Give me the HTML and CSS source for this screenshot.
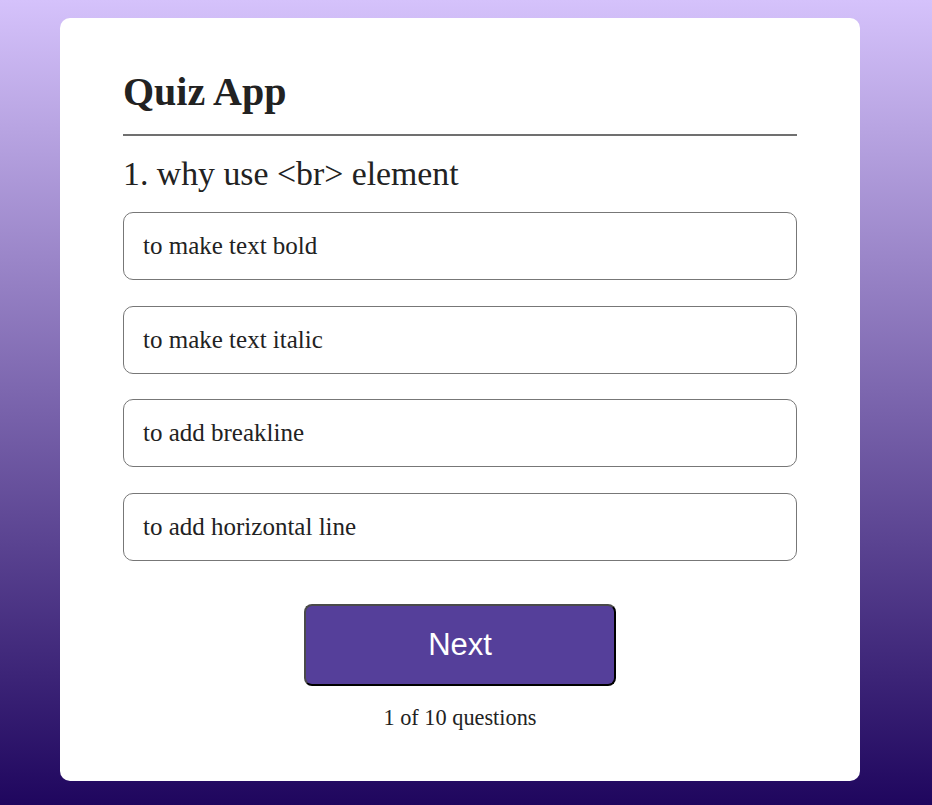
FILE: index.html
```html
<!DOCTYPE html>
<html lang="en">
<head>
<meta charset="utf-8">
<title>Quiz App</title>
<link rel="stylesheet" href="styles.css">
</head>
<body>
<div class="app">
  <h1 class="title">Quiz App</h1>
  <div class="quiz">
    <h2 class="question">1. why use &lt;br&gt; element</h2>
    <div class="answers">
      <button class="answer">to make text bold</button>
      <button class="answer">to make text italic</button>
      <button class="answer">to add breakline</button>
      <button class="answer">to add horizontal line</button>
    </div>
    <button class="next">Next</button>
    <p class="progress">1 of 10 questions</p>
  </div>
</div>
</body>
</html>
```

FILE: styles.css
```css
* { box-sizing: border-box; }

html, body {
  margin: 0;
  padding: 0;
}

body {
  min-height: 805px;
  background: linear-gradient(#d5c2fb, #1f065e);
  font-family: "Liberation Serif", "Times New Roman", serif;
  color: #222;
  padding-top: 18px;
  padding-left: 60px;
}

.app {
  width: 800px;
  height: 763px;
  background: #fff;
  border-radius: 10px;
  padding: 54px 63px 0;
}

.title {
  margin: 0;
  font-size: 40px;
  line-height: 39px;
  font-weight: bold;
  padding-bottom: 23px;
  border-bottom: 2px solid #707070;
}

.quiz {
  display: flex;
  flex-direction: column;
  align-items: center;
}

.question {
  align-self: stretch;
  margin: 21px 0 0;
  font-size: 33.8px;
  line-height: 34px;
  font-weight: normal;
}

.answers {
  align-self: stretch;
  display: flex;
  flex-direction: column;
  gap: 25.67px;
  margin-top: 21px;
}

.answer {
  display: block;
  width: 100%;
  height: 68px;
  background: #fff;
  border: 1px solid #777;
  border-radius: 10px;
  padding: 0 19px;
  text-align: left;
  font-family: "Liberation Serif", "Times New Roman", serif;
  font-size: 25px;
  color: #222;
}

.next {
  margin-top: 43.5px;
  width: 312px;
  height: 82px;
  background: #553f9a;
  color: #fff;
  border: 2px solid;
  border-color: #4a4a4a #000 #000 #4a4a4a;
  border-radius: 8px;
  font-family: "Liberation Sans", Arial, sans-serif;
  font-size: 31px;
}

.progress {
  margin: 21px 0 0;
  font-size: 22.3px;
  line-height: 22px;
}
```
